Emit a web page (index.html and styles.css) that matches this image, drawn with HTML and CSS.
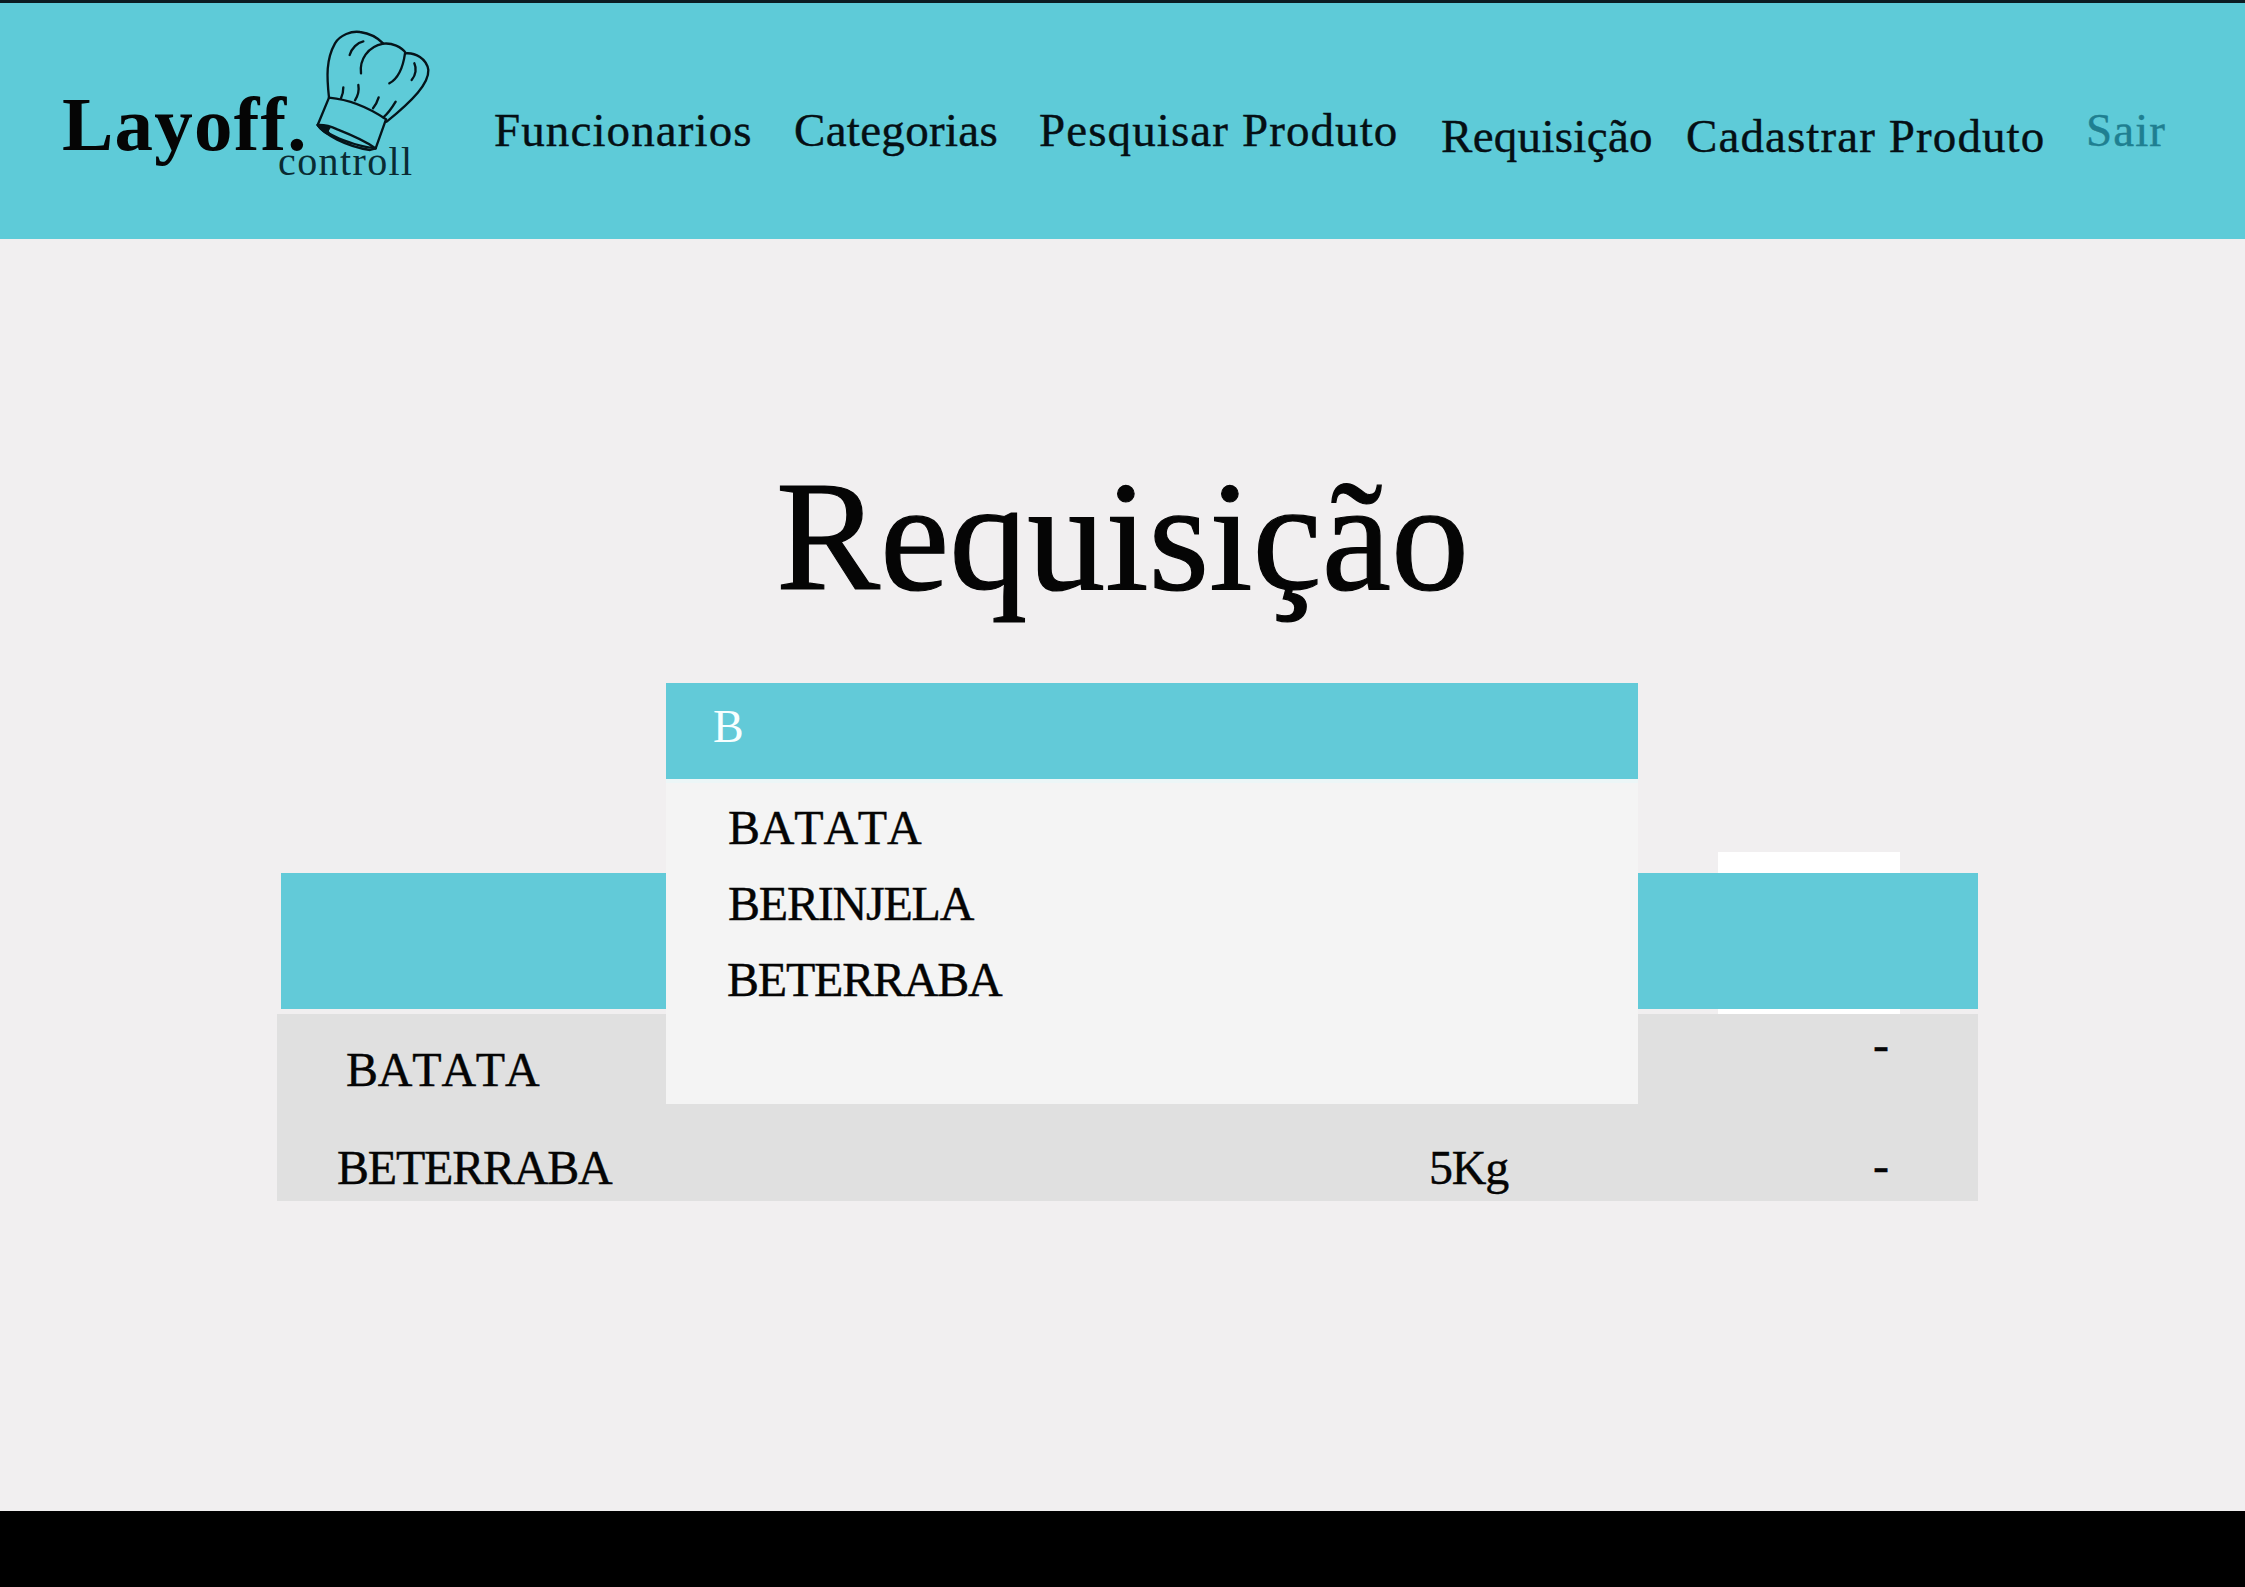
FILE: index.html
```html
<!DOCTYPE html>
<html lang="pt-BR">
<head>
  <meta charset="UTF-8">
  <meta name="viewport" content="width=device-width, initial-scale=1.0">
  <title>Layoff Controll - Requisição</title>
  <link rel="stylesheet" href="styles.css">
</head>
<body>

<header class="topbar">
  <div class="brand">
    <div class="brand-name">Layoff.</div>
    <div class="brand-sub">controll</div>
    <svg class="brand-hat" viewBox="0 0 510 510" fill="none" stroke="#05141a" stroke-width="7" stroke-linecap="round" stroke-linejoin="round">
      <path d="M147 293C140 230 138 178 165 130C180 105 215 92 240 96C270 100 295 115 310 131C335 128 365 140 378 160C405 158 440 175 445 210C447 250 400 300 320 365"/>
      <path d="M147 293C200 298 262 320 318 358L287 445"/>
      <path d="M147 293L113 375C130 402 200 440 270 450L287 445"/>
      <path d="M113 375C130 374 150 378 172 388C215 405 255 422 287 445C250 442 195 425 165 410C145 400 128 390 113 375Z" fill="#5ecbd8"/>
      <path d="M113 375C122 376 136 378 148 384C140 392 142 398 152 405C135 398 122 388 113 375Z" fill="#05141a"/>
      <path d="M209 165C215 145 232 128 250 124"/>
      <path d="M243 220C238 180 262 140 310 131"/>
      <path d="M328 250C350 238 368 210 375 160"/>
      <path d="M395 240C408 225 410 205 403 190"/>
      <path d="M190 262C190 275 188 285 183 295"/>
      <path d="M235 255C238 272 232 290 225 301"/>
      <path d="M296 292C292 305 287 315 279 325"/>
      <path d="M347 305C335 325 325 340 310 352"/>
    </svg>
  </div>
  <nav class="menu">
    <a href="#">Funcionarios</a>
    <a href="#" class="tight">Categorias</a>
    <a href="#">Pesquisar Produto</a>
    <a href="#" class="low tight">Requisição</a>
    <a href="#" class="low">Cadastrar Produto</a>
    <a href="#" class="logout">Sair</a>
  </nav>
</header>

<main class="content">
  <h1 class="title">Requisição</h1>

  <div class="search">
    <input class="search-input" type="text" value="B" aria-label="Buscar produto">
    <ul class="results">
      <li class="wide">BATATA</li>
      <li class="narrow">BERINJELA</li>
      <li class="narrow nudge">BETERRABA</li>
    </ul>
  </div>

  <section class="stock">
    <div class="add-btn"></div>
    <div class="stock-head"></div>
    <div class="stock-body">
      <div class="row">
        <div class="name first wide">BATATA</div>
        <div class="qty"></div>
        <div class="dash up">-</div>
      </div>
      <div class="row">
        <div class="name narrow">BETERRABA</div>
        <div class="qty">5Kg</div>
        <div class="dash">-</div>
      </div>
    </div>
  </section>
</main>

<footer class="bottom"></footer>

</body>
</html>
```

FILE: styles.css
```css
* {
  box-sizing: border-box;
}
body {
  margin: 0;
  min-height: 100vh;
  display: flex;
  flex-direction: column;
  font-family: "Liberation Serif", serif;
  background-color: #f1eff0;
  color: #050505;
}

/* topo */
.topbar {
  height: 239px;
  padding: 83px 0 0 62px;
  display: flex;
  align-items: flex-start;
  background-color: #5ecbd8;
  border-top: 3px solid #0b1c22;
}
.brand {
  position: relative;
  width: 432px;
  flex: none;
}
.brand-name {
  font-size: 77px;
  line-height: 1;
  font-weight: bold;
  letter-spacing: 1.2px;
}
.brand-sub {
  margin: -21px 0 0 216px;
  font-size: 40px;
  line-height: 1;
  letter-spacing: 1.4px;
  color: #0a2b33;
}
.brand-hat {
  position: absolute;
  left: 218px;
  top: -86px;
  width: 170px;
  height: 170px;
}
.menu {
  margin-top: 21px;
  display: grid;
  grid-template-columns: 300px 245px 402px 245px 400px auto;
}
.menu a {
  font-size: 47px;
  line-height: 1;
  letter-spacing: 1.1px;
  color: #050f14;
  text-decoration: none;
  white-space: nowrap;
  -webkit-text-stroke: .4px;
}
.menu a.tight {
  letter-spacing: .3px;
}
.menu a.low {
  padding-top: 6px;
}
.menu a.logout {
  color: #1f7f91;
}

/* conteudo */
.content {
  flex: 1;
}
.title {
  margin: 220px 0 0;
  font-size: 156px;
  line-height: 1;
  font-weight: normal;
  text-align: center;
  -webkit-text-stroke: 1.2px;
}
.search {
  position: relative;
  z-index: 2;
  width: 972px;
  margin: 68px 0 0 666px;
}
.search-input {
  display: block;
  width: 100%;
  height: 96px;
  padding: 0 0 10px 47px;
  border: none;
  outline: none;
  font-family: "Liberation Serif", serif;
  font-size: 46px;
  color: #f7ffff;
  background-color: #62cad8;
}
.results {
  position: absolute;
  top: 100%;
  left: 0;
  width: 100%;
  height: 325px;
  margin: 0;
  padding: 21px 0 0 62px;
  display: flex;
  flex-direction: column;
  gap: 28px;
  list-style: none;
  font-size: 48px;
  line-height: 1;
  background-color: #f4f4f4;
  border-top: 4px solid #ecf6f7;
  -webkit-text-stroke: .4px;
}
.results .nudge {
  margin-left: -1px;
}
.wide {
  letter-spacing: -.2px;
  font-kerning: none;
}
.narrow {
  letter-spacing: -1.2px;
}

/* tabela */
.stock {
  position: relative;
  width: 1701px;
  margin: 94px 0 0 277px;
}
.add-btn {
  position: absolute;
  top: -21px;
  left: 1441px;
  width: 182px;
  height: 162px;
  background-color: #fff;
}
.stock-head {
  position: relative;
  height: 136px;
  margin-left: 4px;
  background-color: #62cad8;
}
.stock-body {
  position: relative;
  margin-top: 5px;
  background-color: #e0e0e0;
}
.row {
  height: 93.5px;
  display: grid;
  grid-template-columns: 1152px 444px auto;
  font-size: 48px;
  line-height: 1;
  -webkit-text-stroke: .4px;
}
.name {
  padding: 36px 0 0 60px;
}
.name.first {
  padding: 32px 0 0 69px;
}
.qty {
  padding-top: 36px;
  letter-spacing: -1.2px;
}
.dash {
  padding-top: 34px;
}
.dash.up {
  padding-top: 7px;
}

/* rodape */
.bottom {
  height: 76px;
  background-color: #000;
}
```
